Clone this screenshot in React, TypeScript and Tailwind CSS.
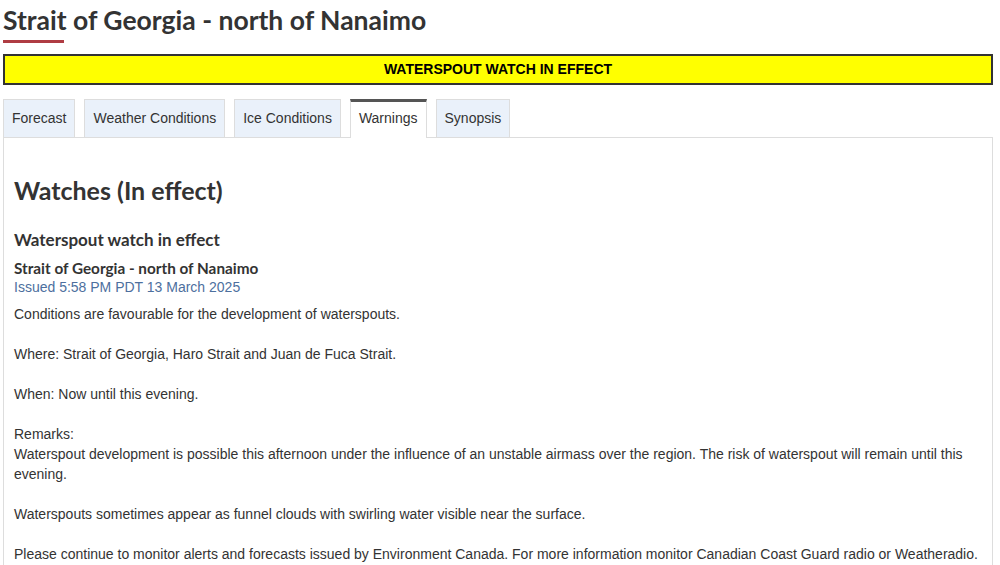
export default function App() {
  const tabs = ['Forecast', 'Weather Conditions', 'Ice Conditions', 'Warnings', 'Synopsis']
  const active = 'Warnings'

  return (
    <div className="min-h-screen bg-white pl-[3px] pr-[7px] text-[#333] font-['Liberation_Sans',Arial,sans-serif]">
      <h1 className="font-['Lato',sans-serif] text-[26.5px] font-bold leading-[40px] text-[#333]">
        Strait of Georgia - north of Nanaimo
      </h1>
      <div className="h-[3px] w-[61px] bg-[#af3c43]" />

      <div className="mt-[11px] flex h-[31px] items-center justify-center border-2 border-[#333] bg-[#ffff00] text-[14px] font-bold text-black">
        WATERSPOUT WATCH IN EFFECT
      </div>

      {/* tabs */}
      <div className="relative z-10 mt-[14px] -mb-px flex gap-[9px]">
        {tabs.map((t) =>
          t === active ? (
            <div
              key={t}
              className="flex h-[39px] items-center border-x border-t-[3px] border-x-[#ddd] border-t-[#555] bg-white px-[8px] pb-[4px] text-[14px] text-[#333]"
            >
              {t}
            </div>
          ) : (
            <div
              key={t}
              className="flex h-[38px] items-center border border-[#ddd] border-b-0 bg-[#eaf1fa] px-[8px] text-[14px] text-[#333]"
            >
              {t}
            </div>
          )
        )}
      </div>

      {/* panel */}
      <div className="border border-[#ddd] px-[10px] pb-6 pt-[36px]">
        <h2 className="font-['Lato',sans-serif] text-[25px] font-bold leading-[32px]">Watches (In effect)</h2>

        <h3 className="mt-[22px] font-['Lato',sans-serif] text-[17px] font-bold leading-[24px]">
          Waterspout watch in effect
        </h3>
        <h4 className="mt-[6px] font-['Lato',sans-serif] text-[15.3px] font-bold leading-[20px]">
          Strait of Georgia - north of Nanaimo
        </h4>
        <p className="text-[14px] leading-[18px] text-[#4d6f9e]">Issued 5:58 PM PDT 13 March 2025</p>

        <div className="mt-[8px] text-[14px] leading-[20px] text-[#333]">
          <p className="mb-5">Conditions are favourable for the development of waterspouts.</p>
          <p className="mb-5">Where: Strait of Georgia, Haro Strait and Juan de Fuca Strait.</p>
          <p className="mb-5">When: Now until this evening.</p>
          <p className="mb-5">
            Remarks:
            <br />
            Waterspout development is possible this afternoon under the influence of an unstable airmass over the
            region. The risk of waterspout will remain until this evening.
          </p>
          <p className="mb-5">Waterspouts sometimes appear as funnel clouds with swirling water visible near the surface.</p>
          <p className="mb-5">
            Please continue to monitor alerts and forecasts issued by Environment Canada. For more information monitor
            Canadian Coast Guard radio or Weatheradio.
          </p>
        </div>
      </div>
    </div>
  )
}
